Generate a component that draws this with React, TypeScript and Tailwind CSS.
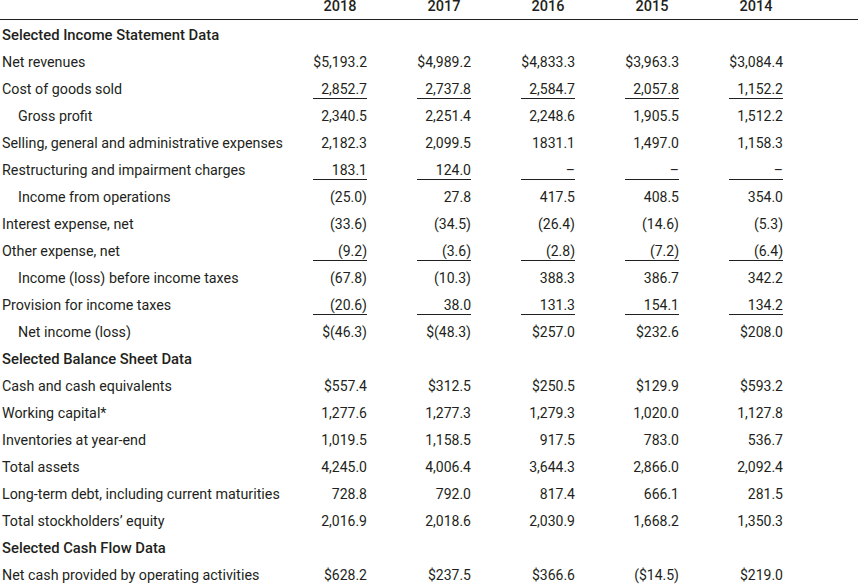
import React from "react";

type Row = {
  label: string;
  values?: string[];
  indent?: boolean;
  heading?: boolean;
  underline?: boolean;
};

const years = ["2018", "2017", "2016", "2015", "2014"];

const rows: Row[] = [
  { label: "Selected Income Statement Data", heading: true },
  { label: "Net revenues", values: ["$5,193.2", "$4,989.2", "$4,833.3", "$3,963.3", "$3,084.4"] },
  { label: "Cost of goods sold", values: ["2,852.7", "2,737.8", "2,584.7", "2,057.8", "1,152.2"], underline: true },
  { label: "Gross profit", indent: true, values: ["2,340.5", "2,251.4", "2,248.6", "1,905.5", "1,512.2"] },
  { label: "Selling, general and administrative expenses", values: ["2,182.3", "2,099.5", "1831.1", "1,497.0", "1,158.3"] },
  { label: "Restructuring and impairment charges", values: ["183.1", "124.0", "–", "–", "–"], underline: true },
  { label: "Income from operations", indent: true, values: ["(25.0)", "27.8", "417.5", "408.5", "354.0"] },
  { label: "Interest expense, net", values: ["(33.6)", "(34.5)", "(26.4)", "(14.6)", "(5.3)"] },
  { label: "Other expense, net", values: ["(9.2)", "(3.6)", "(2.8)", "(7.2)", "(6.4)"], underline: true },
  { label: "Income (loss) before income taxes", indent: true, values: ["(67.8)", "(10.3)", "388.3", "386.7", "342.2"] },
  { label: "Provision for income taxes", values: ["(20.6)", "38.0", "131.3", "154.1", "134.2"], underline: true },
  { label: "Net income (loss)", indent: true, values: ["$(46.3)", "$(48.3)", "$257.0", "$232.6", "$208.0"] },
  { label: "Selected Balance Sheet Data", heading: true },
  { label: "Cash and cash equivalents", values: ["$557.4", "$312.5", "$250.5", "$129.9", "$593.2"] },
  { label: "Working capital*", values: ["1,277.6", "1,277.3", "1,279.3", "1,020.0", "1,127.8"] },
  { label: "Inventories at year-end", values: ["1,019.5", "1,158.5", "917.5", "783.0", "536.7"] },
  { label: "Total assets", values: ["4,245.0", "4,006.4", "3,644.3", "2,866.0", "2,092.4"] },
  { label: "Long-term debt, including current maturities", values: ["728.8", "792.0", "817.4", "666.1", "281.5"] },
  { label: "Total stockholders’ equity", values: ["2,016.9", "2,018.6", "2,030.9", "1,668.2", "1,350.3"] },
  { label: "Selected Cash Flow Data", heading: true },
  { label: "Net cash provided by operating activities", values: ["$628.2", "$237.5", "$366.6", "($14.5)", "$219.0"] },
];

export default function App() {
  return (
    <div className="w-[858px] h-[585px] overflow-hidden bg-white text-[#231f20] text-[14px] font-['Roboto',sans-serif]">
      {/* Header */}
      <div className="grid grid-cols-[263px_repeat(5,54px)] gap-x-[50px] h-[20px] border-b border-[#231f20]">
        <div />
        {years.map((y) => (
          <div key={y} className="text-center font-medium text-[14.5px] leading-[14px]">
            {y}
          </div>
        ))}
      </div>

      <div className="pt-[2px]">
        {rows.map((r) => (
          <div
            key={r.label}
            className="grid grid-cols-[263px_repeat(5,54px)] gap-x-[50px] h-[27px] items-center"
          >
            <div
              className={`whitespace-nowrap ${r.indent ? "pl-[18px]" : "pl-[2px]"} ${
                r.heading ? "font-medium text-[14.8px]" : "text-[14.3px]"
              }`}
            >
              {r.label}
            </div>
            {r.values?.map((v, i) => (
              <div
                key={i}
                className={`text-right leading-[18px] border-b ${
                  r.underline ? "border-[#231f20]" : "border-transparent"
                }`}
              >
                {v}
              </div>
            ))}
          </div>
        ))}
      </div>
    </div>
  );
}
